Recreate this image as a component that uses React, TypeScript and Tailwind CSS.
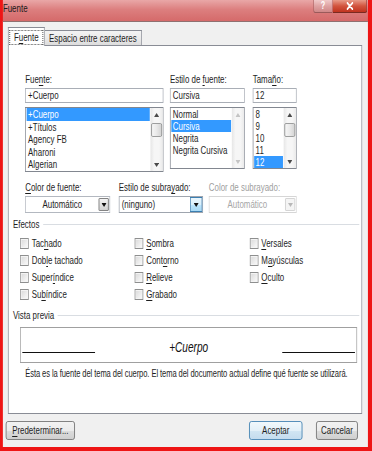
import React from "react";

type Ch = { children: React.ReactNode };

const U = ({ children }: Ch) => (
  <span className="underline decoration-1 underline-offset-[2px]">{children}</span>
);

function Arrow({ dir, color }: { dir: "up" | "down"; color: string }) {
  return (
    <svg width="7" height="4" viewBox="0 0 7 4">
      <path d={dir === "up" ? "M0 4L3.5 0L7 4Z" : "M0 0L7 0L3.5 4Z"} fill={color} />
    </svg>
  );
}

function Scrollbar({ thumb, disabled }: { thumb?: boolean; disabled?: boolean }) {
  const c = disabled ? "#c4c4c4" : "#4a4a4a";
  return (
    <div className="flex w-[17px] shrink-0 flex-col bg-[linear-gradient(90deg,#e6e6e6,#f6f6f6_30%,#f6f6f6_70%,#eaeaea)]">
      <div className="flex h-[13px] shrink-0 items-center justify-center">
        <Arrow dir="up" color={c} />
      </div>
      <div className="flex-1 px-[1px] pt-[2px]">
        {thumb && (
          <div className="h-[14px] rounded-[2px] border border-[#8e8f8f] bg-[linear-gradient(90deg,#f6f6f6,#e9e9e9_50%,#d4d4d4)]" />
        )}
      </div>
      <div className="flex h-[13px] shrink-0 items-center justify-center">
        <Arrow dir="down" color={c} />
      </div>
    </div>
  );
}

function ListBox({
  items,
  sel,
  h,
  row,
  thumb,
  disabled,
}: {
  items: string[];
  sel: number;
  h: string;
  row: string;
  thumb?: boolean;
  disabled?: boolean;
}) {
  return (
    <div className={`flex border border-[#828790] bg-white ${h}`}>
      <div className="flex-1 overflow-hidden px-[1px]">
        {items.map((it, i) => (
          <div
            key={i}
            className={`${row} whitespace-nowrap px-[2px] ${i === sel ? "bg-[#3399ff] text-white" : ""}`}
          >
            {it}
          </div>
        ))}
      </div>
      <Scrollbar thumb={thumb} disabled={disabled} />
    </div>
  );
}

function TextBox({ value }: { value: string }) {
  return (
    <div className="h-[15px] border border-[#a9aeb6] bg-white pl-[3px] leading-[13px]">{value}</div>
  );
}

function Check({ children }: Ch) {
  return (
    <div className="flex h-[17px] items-center">
      <div className="h-[11px] w-[12px] shrink-0 border border-[#8e8f8f] bg-[linear-gradient(135deg,#d8d8d8,#f2f2f2_70%,#fbfbfb)] shadow-[inset_0_0_0_1px_#f4f4f4]" />
      <span className="ml-[4px] whitespace-nowrap">{children}</span>
    </div>
  );
}

function Header({ children }: Ch) {
  return (
    <div className="flex h-[13px] items-center px-[6px]">
      <span className="whitespace-nowrap leading-[13px]">{children}</span>
      <div className="ml-[5px] mr-[-3px] h-px flex-1 bg-[#d9dde2]" />
    </div>
  );
}

export default function App() {
  return (
    <div className="h-[451px] w-[372px] overflow-hidden bg-[#ee1515]">
      <div className="flex h-[451px] w-[517px] origin-top-left scale-x-[0.72] flex-col bg-[#ee1515] font-['Liberation_Sans',Arial,sans-serif] text-[11px] leading-[13px] text-[#1e1e1e]">
        {/* Title bar */}
        <div className="ml-[4px] mr-[6px] flex h-[21px] shrink-0 items-start justify-between bg-[linear-gradient(180deg,#e9a7a7_0%,#dc7f7f_45%,#d56a6a_100%)]">
          <span className="mt-[2px] leading-[13px] text-[#1a1a1a]">Fuente</span>
          <div className="mr-[1px] flex">
            <div className="flex h-[13px] w-[27px] items-center justify-center rounded-bl-[3px] border border-t-0 border-[#9a5a5a] bg-[linear-gradient(180deg,#f0c9c9,#dfa3a3_50%,#d08888)] text-[10px] font-bold leading-[10px] text-white">
              ?
            </div>
            <div className="flex h-[13px] w-[48px] items-center justify-center rounded-br-[3px] border border-l-0 border-t-0 border-[#7a2a20] bg-[linear-gradient(180deg,#e89a88,#d2543e_50%,#c0331f)]">
              <svg width="10" height="8" viewBox="0 0 10 8">
                <path d="M1.5 1L8.5 7M8.5 1L1.5 7" stroke="#ffffff" strokeWidth="2.2" strokeLinecap="round" />
              </svg>
            </div>
          </div>
        </div>

        {/* Client area */}
        <div className="ml-[4px] mr-[6px] mb-[4px] flex flex-1 flex-col border-t border-[#8f7070] bg-[#f0f0f0]">
          {/* Tabs */}
          <div className="mt-[5px] flex h-[18px] items-end px-[7px]">
            <div className="relative z-10 -mb-px flex h-[19px] w-[51px] items-center justify-center border border-b-0 border-[#898c95] bg-white px-[2px]">
              <span className="border border-dotted border-[#444] px-[5px] leading-[13px]">
                F<U>u</U>ente
              </span>
            </div>
            <div className="flex h-[15px] w-[135px] items-center justify-center border border-b-0 border-l-0 border-[#898c95] bg-[linear-gradient(180deg,#f3f3f3,#ebebeb_50%,#dcdcdc)] leading-[13px]">
              Espacio entre caracteres
            </div>
          </div>

          {/* Panel */}
          <div className="ml-[7px] mr-[8px] flex h-[369px] flex-col border border-[#898c95] bg-white pt-[27px]">
            {/* Font / style / size */}
            <div className="flex items-start pl-[23px]">
              <div className="w-[192px]">
                <div className="h-[13px]">
                  Fue<U>n</U>te:
                </div>
                <div className="mt-[2px]">
                  <TextBox value="+Cuerpo" />
                </div>
                <div className="mt-[4px]">
                  <ListBox
                    items={["+Cuerpo", "+Títulos", "Agency FB", "Aharoni", "Algerian"]}
                    sel={0}
                    h="h-[65px]"
                    row="h-[12.5px] leading-[12.5px]"
                    thumb
                  />
                </div>
              </div>
              <div className="ml-[9px] w-[104px]">
                <div className="h-[13px]">
                  Estilo de <U>f</U>uente:
                </div>
                <div className="mt-[2px]">
                  <TextBox value="Cursiva" />
                </div>
                <div className="mt-[4px]">
                  <ListBox
                    items={["Normal", "Cursiva", "Negrita", "Negrita Cursiva"]}
                    sel={1}
                    h="h-[62px]"
                    row="h-[12px] leading-[12px]"
                    disabled
                  />
                </div>
              </div>
              <div className="ml-[11px] w-[61px]">
                <div className="h-[13px]">
                  Tama<U>ñ</U>o:
                </div>
                <div className="mt-[2px]">
                  <TextBox value="12" />
                </div>
                <div className="mt-[4px]">
                  <ListBox
                    items={["8", "9", "10", "11", "12"]}
                    sel={4}
                    h="h-[62px]"
                    row="h-[12px] leading-[12px]"
                    thumb
                  />
                </div>
              </div>
            </div>

            {/* Combos */}
            <div className="mt-[9px] flex items-start pl-[23px]">
              <div className="w-[118px]">
                <div className="h-[13px]">
                  <U>C</U>olor de fuente:
                </div>
                <div className="mt-[2px] flex h-[17px] border border-[#b3b8c0] bg-white">
                  <div className="flex-1 text-center leading-[15px]">Automático</div>
                  <div className="my-[1px] mr-[1px] flex w-[14px] items-center justify-center rounded-[1px] border border-[#707070] bg-[linear-gradient(180deg,#f4f4f4,#e4e4e4_50%,#d2d2d2)]">
                    <Arrow dir="down" color="#111" />
                  </div>
                </div>
              </div>
              <div className="ml-[12px] w-[117px]">
                <div className="h-[13px]">
                  Estilo de subra<U>y</U>ado:
                </div>
                <div className="mt-[2px] flex h-[17px] border border-[#9fa5ae] bg-white">
                  <div className="flex-1 pl-[3px] leading-[15px]">(ninguno)</div>
                  <div className="flex w-[17px] items-center justify-center border border-[#3c7fb1] bg-[linear-gradient(180deg,#eaf6fd,#d9f0fc_50%,#bee6fd_50%,#a7d9f5)]">
                    <Arrow dir="down" color="#111" />
                  </div>
                </div>
              </div>
              <div className="ml-[8px] w-[122px]">
                <div className="h-[13px] text-[#a0a0a0]">Color de subrayado:</div>
                <div className="mt-[2px] flex h-[17px] border border-[#d6d6d6] bg-white">
                  <div className="flex-1 text-center leading-[15px] text-[#a6a6a6]">Automático</div>
                  <div className="my-[1px] mr-[1px] flex w-[14px] items-center justify-center rounded-[1px] border border-[#cfcfcf] bg-[#f4f4f4]">
                    <Arrow dir="down" color="#b8b8b8" />
                  </div>
                </div>
              </div>
            </div>

            {/* Efectos */}
            <div className="mt-[5px]">
              <Header>Efectos</Header>
            </div>
            <div className="mt-[4px] grid grid-cols-[159px_160px_1fr] pl-[16px]">
              <div className="flex flex-col">
                <Check>
                  Tac<U>h</U>ado
                </Check>
                <Check>
                  Dob<U>l</U>e tachado
                </Check>
                <Check>
                  Super<U>í</U>ndice
                </Check>
                <Check>
                  Su<U>b</U>índice
                </Check>
              </div>
              <div className="flex flex-col">
                <Check>
                  <U>S</U>ombra
                </Check>
                <Check>
                  Cont<U>o</U>rno
                </Check>
                <Check>
                  <U>R</U>elieve
                </Check>
                <Check>
                  <U>G</U>rabado
                </Check>
              </div>
              <div className="flex flex-col">
                <Check>
                  <U>V</U>ersales
                </Check>
                <Check>
                  M<U>a</U>yúsculas
                </Check>
                <Check>
                  <U>O</U>culto
                </Check>
              </div>
            </div>

            {/* Vista previa */}
            <div className="mt-[6px]">
              <Header>Vista previa</Header>
            </div>
            <div className="ml-[16px] mr-[6px] mt-[5px] flex h-[36px] items-start justify-between border border-[#a0a0a0] bg-white px-[2px]">
              <div className="mt-[24px] h-px w-[101px] bg-[#111]" />
              <div className="mt-[11px] text-[14px] italic leading-[16px] text-[#111]">+Cuerpo</div>
              <div className="mt-[24px] h-px w-[101px] bg-[#111]" />
            </div>
            <div className="mt-[4px] whitespace-nowrap pl-[23px] text-[10.5px] leading-[13px] tracking-[-0.1px]">
              Ésta es la fuente del tema del cuerpo. El tema del documento actual define qué fuente se utilizará.
            </div>
          </div>

          {/* Buttons */}
          <div className="mt-[7px] flex items-start pl-[4px] pr-[14px]">
            <div className="h-[19px] w-[96px] rounded-[3px] border border-[#707070] bg-[linear-gradient(180deg,#f2f2f2_0%,#ebebeb_50%,#dddddd_50%,#cfcfcf_100%)] text-center leading-[17px]">
              <U>P</U>redeterminar...
            </div>
            <div className="flex-1" />
            <div className="h-[19px] w-[74px] rounded-[3px] border border-[#3c7fb1] bg-[linear-gradient(180deg,#f1f8fc_0%,#e3f0f8_50%,#d2e6f3_50%,#c4dcee_100%)] text-center leading-[17px]">
              Aceptar
            </div>
            <div className="ml-[19px] h-[19px] w-[58px] rounded-[3px] border border-[#707070] bg-[linear-gradient(180deg,#f2f2f2_0%,#ebebeb_50%,#dddddd_50%,#cfcfcf_100%)] text-center leading-[17px]">
              Cancelar
            </div>
          </div>
        </div>
      </div>
    </div>
  );
}
